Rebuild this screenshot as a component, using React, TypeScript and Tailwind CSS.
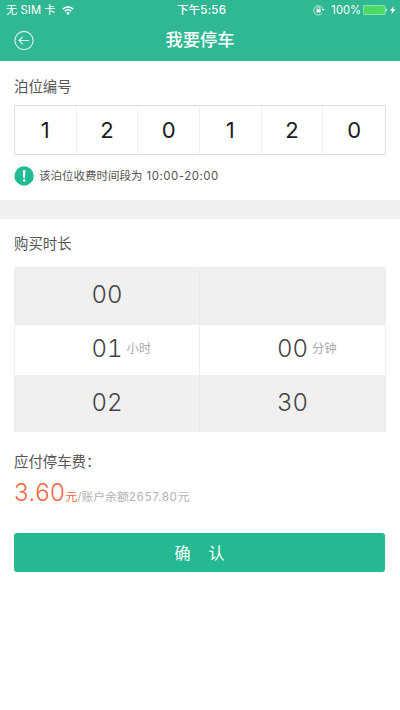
import React from 'react';

const SPACE_NUMBER = ['1', '2', '0', '1', '2', '0'];

const ROWS = [
  { hour: '00', minute: '', active: false },
  { hour: '01', minute: '00', active: true },
  { hour: '02', minute: '30', active: false },
];

const StatusBar: React.FC = () => (
  <div className="grid h-5 grid-cols-[1fr_auto_1fr] items-center pl-[6px] pr-[3px] text-[11.2px] leading-5 text-white">
    <div className="flex items-center gap-[6px]">
      <span className="whitespace-pre tracking-[0.1px]">无 SIM 卡</span>
      <svg className="h-[9px] w-3" viewBox="0 0 12 9" fill="none" stroke="white" strokeWidth="1.6">
        <path d="M.7 3.2a7.5 7.5 0 0 1 10.6 0M2.7 5.2a4.7 4.7 0 0 1 6.6 0" />
        <path d="M6 8.9 4.1 7a2.7 2.7 0 0 1 3.8 0Z" fill="white" stroke="none" />
      </svg>
    </div>
    <span className="text-[11.5px] font-medium tracking-[0.2px]">下午5:56</span>
    <div className="flex items-center justify-end">
      <svg className="mr-[6px] h-[11px] w-3" viewBox="0 0 12 11" fill="none">
        <path d="M9.2 8.1A4.7 4.7 0 1 1 9.8 3.8" stroke="white" strokeWidth=".7" />
        <path d="M8.6 3.9h3L10.1 6Z" fill="white" />
        <path d="M4.2 4.6v-1a1.3 1.3 0 0 1 2.6 0v1" stroke="white" strokeWidth=".8" />
        <rect x="3.4" y="4.4" width="4.2" height="3.2" rx=".4" fill="white" />
      </svg>
      <span className="mr-[2px] text-[11.2px]">100%</span>
      <svg className="h-[10px] w-[34px]" viewBox="0 0 34 10">
        <rect x=".4" y=".4" width="21.8" height="9.2" rx="1.3" fill="#4cd964" stroke="#b9ecd0" strokeWidth=".7" />
        <path d="M23.2 3.4c1.3.4 1.3 2.8 0 3.2Z" fill="#d5f2e6" />
        <path d="M31 .8 27 5.7h2.3L28.3 9.4l4.2-5.1h-2.4Z" fill="white" />
      </svg>
    </div>
  </div>
);

const Header: React.FC = () => (
  <header className="h-[61px] bg-[#30b793]">
    <StatusBar />
    <div className="grid h-10 grid-cols-[1fr_auto_1fr] items-center px-[14px] text-white">
      <button aria-label="返回" className="w-5">
        <svg className="size-5" viewBox="0 0 20 20" fill="none" stroke="#d9f3ea" strokeWidth="1.1">
          <circle cx="10" cy="10.5" r="9.1" />
          <path d="M15 10.5H5M8.8 6.7 5 10.5l3.8 3.8" />
        </svg>
      </button>
      <h1 className="text-[17.3px] font-medium leading-[38px]">我要停车</h1>
    </div>
  </header>
);

const App: React.FC = () => {
  return (
    <div className="min-h-[710px] bg-white font-['Inter','Noto_Sans_CJK_SC',sans-serif] text-[#555]">
      <Header />

      {/* Parking space number */}
      <section className="h-[139px] px-[14px] pt-4">
        <h2 className="text-[14.4px] leading-5">泊位编号</h2>
        <div className="mt-2 grid h-[50px] grid-cols-6 divide-x divide-[#f0f0f0] border border-[#dedede]">
          {SPACE_NUMBER.map((digit, i) => (
            <span key={i} className="flex items-center justify-center pb-px text-[22px] leading-6 text-[#1c1c1c]">
              {digit}
            </span>
          ))}
        </div>
        <div className="mt-[10px] flex items-center gap-[5px]">
          <svg className="size-5" viewBox="0 0 20 20">
            <circle cx="10.1" cy="10" r="9.7" fill="#20bb94" />
            <path d="M8.8 4.2h2.7l-.5 7.7H9.3Z" fill="white" />
            <circle cx="10.15" cy="14.4" r="1.3" fill="white" />
          </svg>
          <p className="pt-px text-[11.5px] leading-5">
            该泊位收费时间段为<span className="pl-1 tracking-[0.5px]">10:00-20:00</span>
          </p>
        </div>
      </section>

      <div className="h-[19px] bg-[#f0f0f0]" />

      {/* Duration picker */}
      <section className="px-[14px] pt-[15px]">
        <h2 className="text-[14.4px] leading-5">购买时长</h2>
        <div className="mt-[13px] grid h-[165px] grid-rows-[58px_50px_57px] border-x border-[#eee]">
          {ROWS.map(({ hour, minute, active }) => (
            <div
              key={hour}
              className={`grid grid-cols-2 divide-x divide-[#ebebeb] ${active ? 'bg-white' : 'bg-[#f0f0f0]'}`}
            >
              {[hour, minute].map((value, i) => (
                <div key={i} className="grid grid-cols-[1fr_auto_1fr] items-center pb-[2px] text-[#444]">
                  <span />
                  <span className="text-[24px] font-[350] leading-8 tabular-nums">{value}</span>
                  {active && (
                    <span className="pl-1 text-[12.3px] text-[#aaa]">{i === 0 ? '小时' : '分钟'}</span>
                  )}
                </div>
              ))}
            </div>
          ))}
        </div>
      </section>

      {/* Payment */}
      <section className="px-[14px] pt-5">
        <h2 className="text-[14.4px] leading-5">应付停车费：</h2>
        <p className="mt-[5px] flex h-8 items-baseline text-[11.8px] leading-8 text-[#b2b2b2]">
          <span className="text-[24px] font-[350] tracking-[0.5px] text-[#f56642]">3.60</span>
          <span className="text-[#f56642]">元</span>
          <span>
            /账户余额<span className="tracking-[0.6px]">2657.80</span>元
          </span>
        </p>
        <button className="mt-[24px] flex h-[39px] w-[371px] items-center justify-center gap-[18px] rounded-[3px] bg-[#24b992] text-[16px] text-white">
          <span>确</span>
          <span>认</span>
        </button>
      </section>
    </div>
  );
};

export default App;
